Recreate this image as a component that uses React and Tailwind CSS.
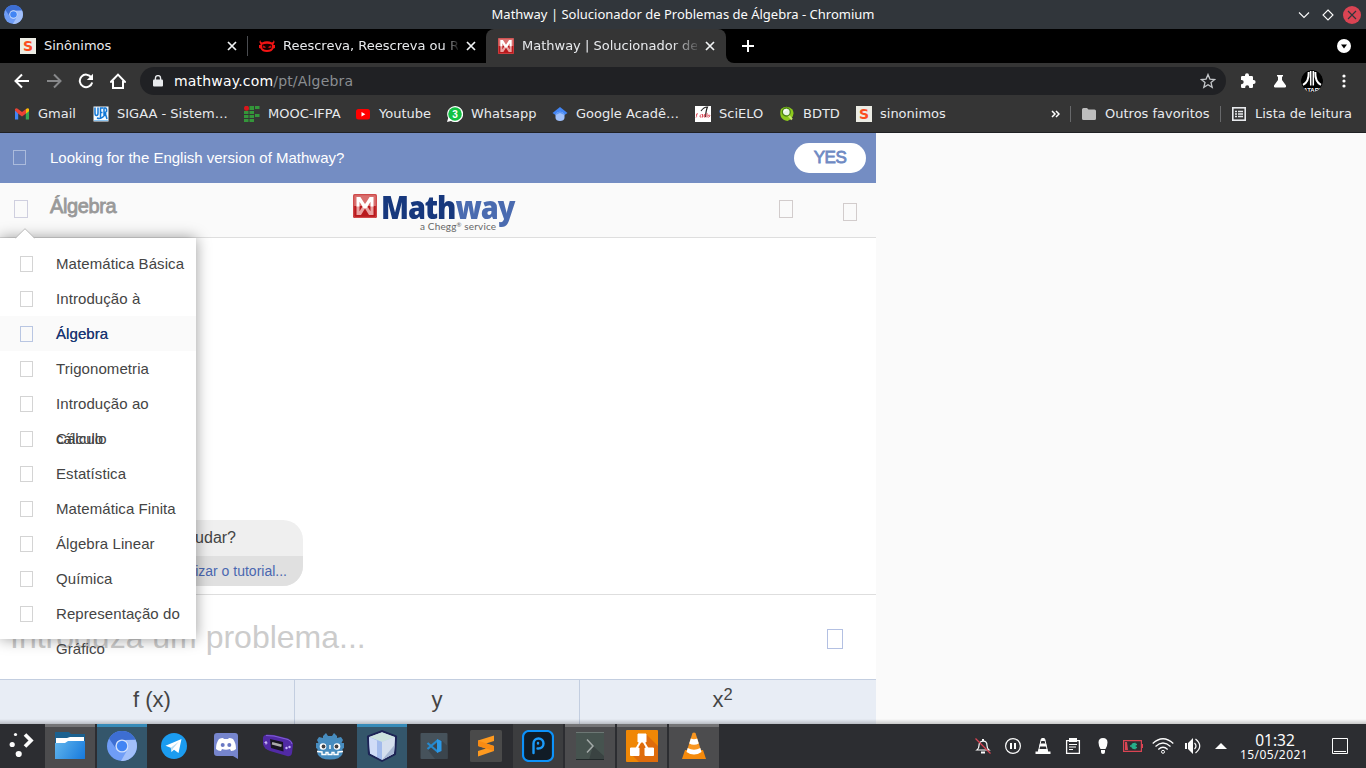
import React from "react";

function Svg({ w = 16, h = 16, vb, className = "", children }) {
  return (
    <svg width={w} height={h} viewBox={vb || `0 0 ${w} ${h}`} className={`block shrink-0 ${className}`} fill="none">
      {children}
    </svg>
  );
}

function Chromium({ size }) {
  return (
    <Svg w={size} h={size} vb="0 0 30 30">
      <circle cx="15" cy="15" r="15" fill="#6f9df6" />
      <path d="M2 7.5A15 15 0 0 1 28 7.5L28.6 9H15A6.6 6.6 0 0 0 9.2 18Z" fill="#3d6ed2" />
      <path d="M28.5 8.7A15 15 0 0 1 14 30L20.8 18A6.6 6.6 0 0 0 18 9Z" fill="#a2c0fa" />
      <circle cx="15" cy="15" r="6.6" fill="#d2e1fb" />
      <circle cx="15" cy="15" r="5.2" fill="#4285f4" />
    </Svg>
  );
}

function SIcon() {
  return (
    <div className="flex h-4 w-4 shrink-0 items-center justify-center bg-[#ececE4] font-['DejaVu_Sans',sans-serif] text-[14px] leading-4 font-bold text-[#fb4d1f]">
      S
    </div>
  );
}

function MathwayIcon({ size }) {
  return (
    <Svg w={size} h={size} vb="0 0 24 24">
      <rect width="24" height="24" rx="2" fill="#d9706f" />
      <path d="M0 12H24V22a2 2 0 0 1-2 2H2a2 2 0 0 1-2-2Z" fill="#b9191d" />
      <rect x=".7" y=".7" width="22.600" height="22.600" rx="1.500" stroke="#cf4a4a" strokeWidth="1.200" />
      <path d="M3.500 21V12H6.500V21ZM17.500 21V12H20.500V21ZM12 8.500L19.800 21H16L12 14.500L8 21H4.200Z" fill="#eaa3a2" />
      <path d="M3.500 12.500V3H7.400L12 10.200L16.600 3H20.500V12.500H17.500V7.800L13.500 14.200H10.500L6.500 7.800V12.500Z" fill="#fff" />
    </Svg>
  );
}

function Close() {
  return (
    <Svg w={10} h={10}>
      <path d="M1 1L9 9M9 1L1 9" stroke="#f1f3f4" strokeWidth="1.700" />
    </Svg>
  );
}

function TitleBar() {
  return (
    <header className="relative flex h-[29px] items-center justify-between bg-[#31363b] pr-[5px] pl-1">
      <Chromium size={19} />
      <h1 className="absolute inset-x-0 top-0 text-center font-['Noto_Sans',sans-serif] text-[13px] leading-[29px] text-[#fcfcfc]">
        Mathway | Solucionador de Problemas de Álgebra - Chromium
      </h1>
      <div className="flex items-center">
        <Svg w={12} h={12} className="mr-3">
          <path d="M1 3.500L6 8.500L11 3.500" stroke="#fcfcfc" strokeWidth="1.100" />
        </Svg>
        <Svg w={12} h={12} className="mr-[9px]">
          <path d="M6 1L11 6L6 11L1 6Z" stroke="#fcfcfc" strokeWidth="1.100" />
        </Svg>
        <Svg w={18} h={18}>
          <circle cx="9" cy="9" r="9" fill="#da4453" />
          <path d="M5 5L13 13M13 5L5 13" stroke="#31363b" strokeWidth="1.200" />
        </Svg>
      </div>
    </header>
  );
}

function TabBar() {
  return (
    <nav className="flex h-[34px] items-center bg-black text-[13px] text-[#e8eaed]">
      <div className="flex w-[247px] items-center pl-5">
        <SIcon />
        <span className="ml-2 w-[183px]">Sinônimos</span>
        <Close />
      </div>
      <div className="h-5 w-px bg-[#4a4c50]" />
      <div className="flex w-[238px] items-center pl-[11px]">
        <Svg w={16} h={16}>
          <path d="M1.500 2Q1 4 3 4.500Q8 2 13 4.500Q15 4 14.500 2Q16.500 4 14.500 6V7H16V10L14.500 10.500Q13 14 8 14T1.500 10.500L0 10V7H1.500V6Q-.5 4 1.500 2Z" fill="#f31414" />
          <path d="M3 6.800Q8 4.800 13 6.800L12.500 10.500Q8 13.500 3.500 10.500Z" fill="#180000" />
          <path d="M4 7.500L7.200 9.300L4.500 10.100ZM12 7.500L8.800 9.300L11.500 10.100Z" fill="#f31414" />
        </Svg>
        <span className="ml-2 w-[175px] overflow-hidden whitespace-nowrap [mask-image:linear-gradient(to_right,black_160px,transparent_177px)]">
          Reescreva, Reescreva ou Reescreva
        </span>
        <div className="ml-2">
          <Close />
        </div>
      </div>
      <div className="flex h-full w-[240px] items-center rounded-t-lg bg-[#353535] pl-3">
        <MathwayIcon size={16} />
        <span className="ml-2 w-[175px] overflow-hidden whitespace-nowrap [mask-image:linear-gradient(to_right,black_150px,transparent_180px)]">
          Mathway | Solucionador de Problemas
        </span>
        <div className="ml-2">
          <Close />
        </div>
      </div>
      <div className="h-2 w-2 self-end bg-[#353535]">
        <div className="h-2 w-2 rounded-bl-lg bg-black" />
      </div>
      <Svg w={12} h={12} className="ml-2">
        <path d="M6 0V12M0 6H12" stroke="#fff" strokeWidth="2" />
      </Svg>
      <Svg w={14} h={14} className="mr-[15px] ml-auto">
        <circle cx="7" cy="7" r="7" fill="#fff" />
        <path d="M4 5.500H10L7 9.500Z" fill="#000" />
      </Svg>
    </nav>
  );
}

function Toolbar() {
  return (
    <div className="flex h-9 items-center bg-[#353535] pl-[14px]">
      <Svg w={16} h={16} className="mr-4">
        <path d="M15 8H2M8 1.500L1.500 8L8 14.500" stroke="#fff" strokeWidth="2" />
      </Svg>
      <Svg w={16} h={16} className="mr-4">
        <path d="M1 8H14M8 1.500L14.500 8L8 14.500" stroke="#87888a" strokeWidth="2" />
      </Svg>
      <Svg w={16} h={16} className="mr-4">
        <path d="M13.400 4.500A6.300 6.300 0 1 0 14.200 9.500" stroke="#fff" strokeWidth="2" />
        <path d="M15 .8V7H8.800Z" fill="#fff" />
      </Svg>
      <Svg w={16} h={16} className="mr-[14px]">
        <path d="M1 8.800L8 1.600L15 8.800H13V15H3V8.800Z" stroke="#fff" strokeWidth="2" />
      </Svg>
      <div className="flex h-7 w-[1086px] items-center rounded-full bg-[#202124] pr-[10px] pl-[13px]">
        <Svg w={10} h={12}>
          <path d="M1 4.500H9Q10 4.500 10 5.500V10.500Q10 11.500 9 11.500H1Q0 11.500 0 10.500V5.500Q0 4.500 1 4.500Z" fill="#e8eaed" />
          <path d="M2.400 5V3.200A2.600 2.600 0 0 1 7.600 3.200V5" stroke="#e8eaed" strokeWidth="1.400" />
        </Svg>
        <span className="ml-[11px] text-[14px] tracking-[0.18px] text-[#8a8d91]">
          <span className="text-white">mathway.com</span>/pt/Algebra
        </span>
        <Svg w={16} h={16} className="ml-auto">
          <path d="M8 1.500L9.900 6.100L14.700 6.500L11 9.600L12.200 14.400L8 11.800L3.800 14.400L5 9.600L1.300 6.500L6.100 6.100Z" stroke="#c4c7ca" strokeWidth="1.300" />
        </Svg>
      </div>
      <Svg w={16} h={16} className="ml-[14px]">
        <path d="M1 4.200Q1 3 2.200 3H5V2.200A2 2 0 0 1 9 2.200V3H11.800Q13 3 13 4.200V7H13.600A2 2 0 0 1 13.600 11H13V13.800Q13 15 11.800 15H9.200V14.200A2 2 0 0 0 5.200 14.200V15H2.200Q1 15 1 13.800V11.200H1.600A2 2 0 0 0 1.600 7H1Z" fill="#fff" />
      </Svg>
      <Svg w={14} h={14} className="ml-[17px]">
        <path d="M4 1H10V2.400H9V6L13 11.500Q13.500 13.500 12 13.500H2Q.5 13.500 1 11.500L5 6V2.400H4Z" fill="#fff" />
      </Svg>
      <Svg w={22} h={22} className="ml-[14px] overflow-hidden rounded-full">
        <circle cx="11" cy="11" r="11" fill="#000" />
        <path d="M9.700 1V15.500M12.300 1V15.500" stroke="#fff" strokeWidth="1.500" />
        <path d="M7.700 2Q8 12 2 14.800M14.300 2Q14 12 20 14.800" stroke="#fff" strokeWidth="2" />
        <text x="11" y="21.500" textAnchor="middle" fontSize="6" fontWeight="bold" fill="#fff" fontFamily="Liberation Sans, sans-serif">ATARI</text>
      </Svg>
      <Svg w={4} h={14} className="ml-[19px]">
        <circle cx="2" cy="2" r="1.600" fill="#fff" />
        <circle cx="2" cy="7" r="1.600" fill="#fff" />
        <circle cx="2" cy="12" r="1.600" fill="#fff" />
      </Svg>
    </div>
  );
}

const Gmail = () => (
  <Svg w={16} h={16}>
    <path d="M1 13.500V4L4.200 6.500V13.500Z" fill="#4285f4" />
    <path d="M15 13.500V4L11.800 6.500V13.500Z" fill="#34a853" />
    <path d="M1 4.500V3Q2.500 1.600 4 3L8 6L12 3V7.500L8 10.500L4 7.500Z" fill="#ea4335" />
    <path d="M12 3Q14 1.600 15 3V5.200L12 7.500Z" fill="#fbbc04" />
  </Svg>
);
const Ufrn = () => (
  <Svg w={16} h={16} className="-ml-px">
    <rect width="15" height="15" x=".5" y=".5" fill="#f4faff" />
    <path d="M2 1.500V7Q2 9.500 3.500 9.500T5 7V1.500M7.500 13V2H10M7.500 6.500H9.500M11 10V2H12.500Q14 2.500 13.500 5.500L12 6.500L14 13M4 12Q9 14 13 7" stroke="#1378d6" strokeWidth="1.500" />
    <path d="M1 14.500H15" stroke="#8cc4f0" />
  </Svg>
);
const Ifpa = () => (
  <Svg w={16} h={16}>
    <circle cx="2.500" cy="2.300" r="2.500" fill="#d8161b" />
    <path d="M5.500 0H10V4H5.500ZM11 0H15.500V3H11ZM0 5H4.500V8H0ZM5.500 5H10V8H5.500ZM0 9H4.500V12H0ZM5.500 9H10V12H5.500ZM11 8H15.500V11H11ZM0 13H4.500V16H0ZM5.500 13H10V16H5.500Z" fill="#34963a" />
  </Svg>
);
const Youtube = () => (
  <Svg w={16} h={16} className="-ml-px">
    <rect x="1" y="3" width="14" height="10.500" rx="2.500" fill="#f00" />
    <path d="M6.500 6V10.500L10.300 8.200Z" fill="#fff" />
  </Svg>
);
const Whatsapp = () => (
  <Svg w={16} h={16}>
    <path d="M0 16L1.200 12A8 8 0 1 1 4 14.900Z" fill="#fff" />
    <circle cx="8" cy="8" r="6.800" fill="#13c144" />
    <text x="8" y="11.600" textAnchor="middle" fontSize="10" fontWeight="bold" fill="#fff" fontFamily="Liberation Sans, sans-serif">3</text>
  </Svg>
);
const Scholar = () => (
  <Svg w={16} h={16}>
    <path d="M8 1L15.500 7L8 12L.5 7Z" fill="#4285f4" />
    <path d="M3.500 9A4.700 4.700 0 0 1 12.500 9V12Q12 15 8 15T3.500 12Z" fill="#9fc0fa" />
    <path d="M3.500 9A4.700 4.700 0 0 1 12.500 9L8 7Z" fill="#5f98f5" />
  </Svg>
);
const Scielo = () => (
  <Svg w={16} h={16}>
    <rect width="16" height="16" fill="#fff" />
    <path d="M6 5Q9 .8 12.500 1Q11 4 10.500 11" stroke="#222" strokeWidth="1.200" />
    <path d="M3 7.800Q1 7.500 1.500 9T1 11.500M6.500 8.500Q4.500 9 5 11H6.500M7.500 8V11.500M9 10Q11 9.500 10 8.500T9 11H10.500M12 7V11.500M13 10.500Q13 8.500 14.500 9T13.500 11.500" stroke="#de5360" />
  </Svg>
);
const Bdtd = () => (
  <Svg w={16} h={16}>
    <path d="M2 3Q8-1.500 13.500 3.500Q16 9 12 13L8.500 15Q4 14.500 2 11Q.5 7 2 3Z" fill="#8cc91d" />
    <path d="M9.500 9.500L13 13.500" stroke="#c7e86b" strokeWidth="2" />
    <circle cx="7.300" cy="6" r="4" fill="#e7f5e4" stroke="#4b8412" strokeWidth="1.300" />
    <path d="M5 5.500Q6 3.500 8 3.500" stroke="#fff" strokeWidth="1.300" />
  </Svg>
);

const bookmarks = [
  [Gmail, "Gmail", "w-20"],
  [Ufrn, "SIGAA - Sistem…", "w-[150px]"],
  [Ifpa, "MOOC-IFPA", "w-28"],
  [Youtube, "Youtube", "w-[91px]"],
  [Whatsapp, "Whatsapp", "w-[105px]"],
  [Scholar, "Google Acadê…", "w-[143px]"],
  [Scielo, "SciELO", "w-[84px]"],
  [Bdtd, "BDTD", "w-[77px]"],
  [SIcon, "sinonimos", "w-[195px]"],
];

function Bookmarks() {
  return (
    <div className="flex h-[34px] items-center border-b border-[#202124] bg-[#353535] pb-1 pl-[14px] text-[13px] whitespace-nowrap text-[#e8eaed]">
      {bookmarks.map(([Icon, label, width]) => (
        <div key={label} className={`flex shrink-0 items-center gap-2 ${width}`}>
          <Icon />
          <span>{label}</span>
        </div>
      ))}
      <Svg w={9} h={8}>
        <path d="M1 1L4 4L1 7M5 1L8 4L5 7" stroke="#fff" strokeWidth="1.500" />
      </Svg>
      <div className="ml-[10px] h-4 w-px bg-[#68696b]" />
      <Svg w={14} h={12} className="mr-[9px] ml-[11px]">
        <path d="M0 1.500Q0 0 1.500 0H5L6.500 1.500H12.500Q14 1.500 14 3V10.500Q14 12 12.500 12H1.500Q0 12 0 10.500Z" fill="#bdbdbd" />
      </Svg>
      <span className="w-[115px]">Outros favoritos</span>
      <div className="h-4 w-px bg-[#68696b]" />
      <Svg w={14} h={14} className="mr-[9px] ml-[11px]">
        <rect x=".8" y=".8" width="12.400" height="12.400" stroke="#e8eaed" strokeWidth="1.600" />
        <path d="M3 4.500H5M6 4.500H11M3 7H5M6 7H11M3 9.500H5M6 9.500H11" stroke="#e8eaed" strokeWidth="1.300" />
      </Svg>
      <span>Lista de leitura</span>
    </div>
  );
}

const subjects = [
  "Matemática Básica",
  "Introdução à Álgebra",
  "Álgebra",
  "Trigonometria",
  "Introdução ao cálculo",
  "Cálculo",
  "Estatística",
  "Matemática Finita",
  "Álgebra Linear",
  "Química",
  "Representação do Gráfico",
];

function SubjectMenu() {
  return (
    <div className="absolute top-[105px] left-0 z-10 h-[401px] w-[196px] bg-white pt-2 shadow-[0_0_14px_rgba(0,0,0,0.4)]">
      <Svg w={20} h={11} className="absolute -top-[10px] left-[15px]">
        <path d="M0 11L10 1L20 11Z" fill="#fff" />
        <path d="M0.500 10L10 .700L19.500 10" stroke="#bdbdbd" />
      </Svg>
      <ul>
        {subjects.map((subject) => {
          const active = subject === "Álgebra";
          return (
            <li
              key={subject}
              className={`flex h-[35px] pl-5 text-[15px] leading-[35px] tracking-[0.08px] ${active ? "bg-[#fafafa] text-[#17387d]" : "text-[#444]"}`}
            >
              <i className={`mt-[10px] h-4 w-[13px] shrink-0 border ${active ? "border-[#b9c6e2]" : "border-[#d4d4d4]"}`} />
              <span className="ml-[23px] w-[135px]">{subject}</span>
            </li>
          );
        })}
      </ul>
    </div>
  );
}

function Page() {
  return (
    <main className="relative h-[591px] overflow-hidden bg-[#fafafa] font-['Liberation_Sans',Arial,sans-serif]">
      <div className="flex h-full w-[876px] flex-col bg-white">
        <div className="flex h-[50px] shrink-0 items-center bg-[#748dc3] pr-[10px] pl-[13px] text-white">
          <i className="mb-px h-[15px] w-[13px] border border-[#abbbdc]" />
          <span className="ml-6 text-[15px]">Looking for the English version of Mathway?</span>
          <button className="ml-auto h-[30px] w-[72px] rounded-full bg-white text-[17px] tracking-[-0.5px] text-[#6f8ac3] [-webkit-text-stroke:0.8px_#6f8ac3]">
            YES
          </button>
        </div>
        <div className="flex h-[55px] shrink-0 border-b border-[#dedede] bg-[#fafafa] pl-[14px]">
          <i className="mt-[17px] h-[18px] w-[14px] border border-[#cfcfdf]" />
          <span className="mt-[9px] ml-[22px] w-[302px] text-[20px] leading-7 tracking-[-0.4px] text-[#999] [-webkit-text-stroke:0.8px_#999]">
            Álgebra
          </span>
          <div className="mt-[11px] ml-px flex w-[166px]">
            <MathwayIcon size={24} />
            <div className="ml-[4px] font-['Open_Sans',sans-serif]">
              <div className="h-[27px] w-[148px] origin-left scale-x-[0.905] text-[32px] leading-[26px] font-extrabold tracking-[-1.2px] text-[#17387d]">
                Math<span className="text-[#4a6bb0]">way</span>
              </div>
              <div className="ml-[39px] font-[Lato,sans-serif] text-[10px] leading-[10px] tracking-[0.15px] whitespace-nowrap text-[#666]">
                a Chegg<sup className="text-[6px]">®</sup> service
              </div>
            </div>
          </div>
          <i className="mt-[17px] ml-[260px] h-[18px] w-[14px] border border-[#d2cccc]" />
          <i className="mt-5 ml-[50px] h-[18px] w-[14px] border border-[#d2cccc]" />
        </div>
        <div className="flex flex-1 items-end pb-2 pl-[10px]">
          <div className="w-[293px] overflow-hidden rounded-[20px] bg-[#efefef] text-right">
            <p className="h-9 pr-[67px] text-[16px] leading-9 text-[#444]">Como posso ajudar?</p>
            <p className="h-[30px] bg-[#e0e0e0] pr-4 text-[14px] leading-[30px] text-[#4a67b0]">Visualizar o tutorial...</p>
          </div>
        </div>
        <div className="flex h-[85px] shrink-0 items-center border-t border-[#dedede] pr-[33px] pl-[10px]">
          <span className="text-[32px] text-[#ccc]">Introduza um problema...</span>
          <i className="mt-1 ml-auto h-5 w-4 border border-[#b3c0e2]" />
        </div>
        <div className="grid h-[45px] shrink-0 grid-cols-[295px_285px_296px] border-t border-[#c3cee0] bg-[#e8edf5] text-center text-[22px] leading-10 text-[#444]">
          <div className="border-r border-[#c3cee0] pl-[10px]">f (x)</div>
          <div className="border-r border-[#c3cee0]">y</div>
          <div className="pr-[11px]">
            x<sup className="top-[-7px] text-[16.500px]">2</sup>
          </div>
        </div>
      </div>
      <SubjectMenu />
      <div className="absolute inset-x-0 bottom-0 h-[5px] bg-linear-to-b from-transparent to-black/20" />
    </main>
  );
}

const Folder = () => (
  <Svg w={30} h={28}>
    <path d="M0 0H14L16 2H30V14H0Z" fill="#1b618f" />
    <path d="M1 6H12L15 5H29V14H1Z" fill="#fff" />
    <path d="M0 11H10L13 9H30V27H0Z" fill="url(#folder)" />
    <defs>
      <linearGradient id="folder" x1="0" y1="9" x2="30" y2="27" gradientUnits="userSpaceOnUse">
        <stop stopColor="#62b6ed" />
        <stop offset="1" stopColor="#1679dc" />
      </linearGradient>
    </defs>
  </Svg>
);
const Telegram = () => (
  <Svg w={26} h={26}>
    <circle cx="13" cy="13" r="13" fill="#1b9cf0" />
    <path d="M4.500 12.700L20.500 6L17.500 20L13 16.800L10.500 19L9.800 14.800Z" fill="#fff" />
    <path d="M9.800 14.800L18 8.500L12 15.500L10.500 19Z" fill="#b9dcf2" />
  </Svg>
);
const Discord = () => (
  <Svg w={26} h={28}>
    <path d="M4 1H22Q25 1 25 4V27L20 24H4Q1 24 1 21V4Q1 1 4 1Z" fill="#7685cd" />
    <path d="M6 7Q8 6 10 6L11 7H15L16 6Q18 6 20 7Q23 11 23 17Q21 19 18 19L17 17Q13 18.500 9 17L8 19Q5 19 3 17Q3 11 6 7Z" fill="#fff" />
    <circle cx="9.700" cy="13" r="2" fill="#6978c4" />
    <circle cx="16.300" cy="13" r="2" fill="#6978c4" />
  </Svg>
);
const Gba = () => (
  <Svg w={32} h={26}>
    <path d="M1 5Q1 2 5 1.500L12 2L26 5.500Q31 8 31 12L30 20Q29 24 25 23L8 18Q2 16 1 11Z" fill="#512aa5" />
    <path d="M4 2.500L12 3L26 6.500Q30 8.500 30 11" stroke="#8460d8" />
    <path d="M8 6L21 9L21.500 18.500L9 15Z" fill="#171521" />
    <path d="M10 10.300L19.500 12.700" stroke="#aaa" strokeWidth="2.500" />
    <path d="M2.500 9.500L5.500 10M4 8V11.500" stroke="#d7c9ff" />
    <circle cx="24.500" cy="15" r="1.200" fill="#c9b7ff" />
    <circle cx="27.500" cy="14" r="1.200" fill="#c9b7ff" />
  </Svg>
);
const Godot = () => (
  <Svg w={30} h={28}>
    <path d="M8 4L11 1L13 4H17L19 1L22 4V6L26 5L28 8L26.500 11H29V16L27.500 17V22Q25 27.500 15 27.500T2.500 22V17L1 16V11H3.500L2 8L4 5L8 6Z" fill="#478cbf" />
    <circle cx="8" cy="14.500" r="3.300" fill="#fff" />
    <circle cx="22" cy="14.500" r="3.300" fill="#fff" />
    <circle cx="8.500" cy="14.500" r="1.900" fill="#414042" />
    <circle cx="21.500" cy="14.500" r="1.900" fill="#414042" />
    <path d="M15 13V17M2 19.500L7 20V22.500H11V20.500H13V22.500H17V20.500H19V22.500H23V20L28 19.500" stroke="#fff" strokeWidth="1.400" />
  </Svg>
);
const Netbeans = () => (
  <Svg w={32} h={32}>
    <path d="M16 1.200L30 6.500L29 24L16 30.800L3 24L2 6.500Z" fill="#bccdf0" stroke="#1d2456" strokeWidth="2.200" strokeLinejoin="round" />
    <path d="M3 7L16 2.200L29 7L16 12Z" fill="#cbe2dd" />
    <path d="M3 7L16 12V30L4 23.500Z" fill="#a3bbec" />
    <path d="M3 7L11 10.500V27L4 23.500Z" fill="#d0dcf7" />
    <path d="M29 7L16 12V30L28 23.500Z" fill="#d5dfee" />
    <path d="M28.500 15L16 30L28 23.500Z" fill="#a7b7d3" />
  </Svg>
);
const Code = () => (
  <Svg w={28} h={28}>
    <rect x=".5" y="1" width="27" height="26" rx="1" fill="#46525b" />
    <path d="M21 8L27.500 14V27H15L8 18Z" fill="#3b454d" />
    <path d="M18 8L7.500 17M18 20L7.500 11" stroke="#2589cf" strokeWidth="2.200" />
    <path d="M17 7L21.500 9V19L17 21Z" fill="#2b98e6" />
  </Svg>
);
const Sublime = () => (
  <Svg w={32} h={32}>
    <rect width="32" height="32" rx="1.500" fill="#4a4a4a" />
    <path d="M8 10.500L24 5.500V11L16 13.500L24 16V21L8 26.500V21L16 18.500L8 16Z" fill="#ff9a1f" />
    <path d="M8 16V10.500L24 16V21Z" fill="#f98b13" />
  </Svg>
);
const Pencil = () => (
  <Svg w={32} h={32}>
    <rect x="1" y="1" width="30" height="30" rx="6" fill="#111c26" stroke="#0c92fa" strokeWidth="2.200" />
    <path d="M11.500 23V13.500A5 5 0 1 1 16.500 18.500H15.500M16 13.500V13" stroke="#1b9bfa" strokeWidth="2.400" strokeLinecap="round" />
  </Svg>
);
const Terminal = () => (
  <Svg w={28} h={28}>
    <rect width="28" height="28" fill="#46534f" />
    <path d="M17 14L28 24V28H13Z" fill="#3a4342" />
    <path d="M0 .5H28" stroke="#6c7774" />
    <path d="M0 27.500H28" stroke="#22292a" />
    <path d="M11 7.500L17 14L11 20.500" stroke="#a3aaa8" strokeWidth="1.500" />
  </Svg>
);
const Drawio = () => (
  <Svg w={32} h={32}>
    <rect width="32" height="32" rx="1" fill="#f08705" />
    <path d="M20 4L32 16V32H13L6 25L16 12Z" fill="#df6c0c" />
    <path d="M16 9L9 21M16 9L23 21" stroke="#fff" strokeWidth="2" />
    <path d="M12 4H20V12H12ZM4.500 18H13V25.500H4.500ZM19 18H27.500V25.500H19Z" fill="#fff" stroke="#fff" strokeLinejoin="round" />
  </Svg>
);
const Vlc = () => (
  <Svg w={26} h={28}>
    <path d="M4 18H22L25 27H1Z" fill="#f58a0c" />
    <path d="M11.500 1Q13 0 14.500 1L20.500 20Q13 25 5.500 20Z" fill="#f99620" />
    <path d="M9.800 6.500Q13 8 16.200 6.500L17.800 11.500Q13 14 8.200 11.500ZM6.700 16Q13 19.500 19.300 16L20.500 20Q13 25 5.500 20Z" fill="#fff" />
  </Svg>
);

const tasks = [
  [Folder, "open"],
  [() => <Chromium size={30} />, "active"],
  [Telegram, "idle"],
  [Discord, "idle"],
  [Gba, "idle"],
  [Godot, "idle"],
  [Netbeans, "active"],
  [Code, "idle"],
  [Sublime, "idle"],
  [Pencil, "hover"],
  [Terminal, "open"],
  [Drawio, "open"],
  [Vlc, "open"],
];

const taskStyles = {
  open: "border-[#747476] bg-[#4c4c4e]",
  active: "border-[#378bb8] bg-[#34566b]",
  idle: "border-transparent",
  hover: "border-[#3c3d3f] bg-[#3c3d3f]",
};

const tray = [
  <Svg key="bell">
    <path d="M2 12Q4 10.500 4 7.500Q4 3.500 8 3.200T12 7.500Q12 10.500 14 12Z" stroke="#fcfcfc" strokeWidth="1.200" />
    <path d="M6 14.500H10M8 1V3" stroke="#fcfcfc" strokeWidth="2" />
    <path d="M.5 .5L15.500 15.500" stroke="#da4453" strokeWidth="1.300" />
  </Svg>,
  <Svg key="pause">
    <circle cx="8" cy="8" r="7.400" stroke="#fcfcfc" strokeWidth="1.200" />
    <path d="M6 5V11M10 5V11" stroke="#fcfcfc" strokeWidth="2" />
  </Svg>,
  <Svg key="cone">
    <path d="M6.500 0H9.500L10.300 3H5.700ZM5 5.500H11L11.800 8.500H4.200ZM3.700 11H12.300L13 13.500H15.500V16H.5V13.500H3Z" fill="#fcfcfc" />
    <path d="M6.300 1L3.300 14M9.700 1L12.700 14" stroke="#fcfcfc" />
  </Svg>,
  <Svg key="clipboard">
    <path d="M1.600 2.600H14.400V15.400H1.600Z" stroke="#fcfcfc" strokeWidth="1.300" />
    <path d="M4 0H12V4H4Z" fill="#fcfcfc" />
    <path d="M4 6.500H12M4 9H11M4 11.500H8" stroke="#fcfcfc" />
  </Svg>,
  <Svg key="bulb">
    <path d="M8 0Q12.500 0 12.500 4.500Q12.500 7.500 10.500 11H5.500Q3.500 7.500 3.500 4.500Q3.500 0 8 0ZM6 12H10V14Q10 16 8 16T6 14Z" fill="#fcfcfc" />
  </Svg>,
  <Svg key="battery" w={20} h={12}>
    <path d="M.6 .6H18.400V11.400H.6ZM19.500 4V8" stroke="#da4453" strokeWidth="1.200" />
    <path d="M2 2H4L5 10H2Z" fill="#da4453" />
    <path d="M7 6H9M9 6Q9 3.500 12 3.500V8.500Q9 8.500 9 6ZM12 4.500H14M12 7.500H14" stroke="#27ae8b" strokeWidth="1.500" fill="#27ae8b" />
  </Svg>,
  <Svg key="wifi" w={22} h={16}>
    <path d="M.7 5.500Q11-4 21.300 5.500M3.500 8.500Q11 1.500 18.500 8.500M6.300 11.500Q11 7 15.700 11.500" stroke="#fcfcfc" strokeWidth="1.200" />
    <circle cx="11" cy="13.800" r="1.500" stroke="#fcfcfc" />
  </Svg>,
  <Svg key="volume">
    <path d="M0 5H2V11H0ZM3 5L8 0V16L3 11Z" fill="#fcfcfc" />
    <path d="M9.500 5Q12.500 8 9.500 11M10.500 1Q19 8 10.500 15" stroke="#fcfcfc" strokeWidth="1.200" />
  </Svg>,
];

function Taskbar() {
  return (
    <footer className="flex h-11 bg-[#2c2d31] font-['Noto_Sans',sans-serif] text-[#fcfcfc]">
      <div className="flex w-[45px] items-center pb-1 pl-[9px]">
        <Svg w={25} h={25}>
          <circle cx="6.500" cy="2.500" r="1.600" fill="#fcfcfc" />
          <circle cx="3.200" cy="12.500" r="2.600" fill="#fcfcfc" />
          <circle cx="9.700" cy="22" r="3.100" fill="#fcfcfc" />
          <path d="M16 2.500L22 8.500L16 14.500" stroke="#fcfcfc" strokeWidth="3.700" />
        </Svg>
      </div>
      <div className="flex gap-0.5">
        {tasks.map(([Icon, state], index) => (
          <div key={index} className={`flex w-[50px] items-center justify-center border-t-[3px] pb-[3px] ${taskStyles[state]}`}>
            <Icon />
          </div>
        ))}
      </div>
      <div className="ml-[249px] flex items-center">
        {tray.map((icon) => (
          <div key={icon.key} className="flex w-[30px] justify-center">
            {icon}
          </div>
        ))}
        <Svg w={12} h={6} className="ml-[7px]">
          <path d="M0 6L6 0L12 6Z" fill="#fcfcfc" />
        </Svg>
      </div>
      <div className="ml-[7px] flex w-[80px] flex-col items-center pt-[7px] pr-0">
        <span className="pl-0.5 text-[15.500px] leading-[18px]">01:32</span>
        <span className="text-[12px] leading-[12px] tracking-[0.4px]">15/05/2021</span>
      </div>
      <Svg w={16} h={16} className="mt-[14px] ml-[18px]">
        <path d="M.5 .5H15.500V15.500H.5ZM2 13.500H14" stroke="#fcfcfc" />
      </Svg>
    </footer>
  );
}

export default function App() {
  return (
    <div className="h-[768px] w-[1366px] overflow-hidden font-['DejaVu_Sans',sans-serif]">
      <TitleBar />
      <TabBar />
      <Toolbar />
      <Bookmarks />
      <Page />
      <Taskbar />
    </div>
  );
}
